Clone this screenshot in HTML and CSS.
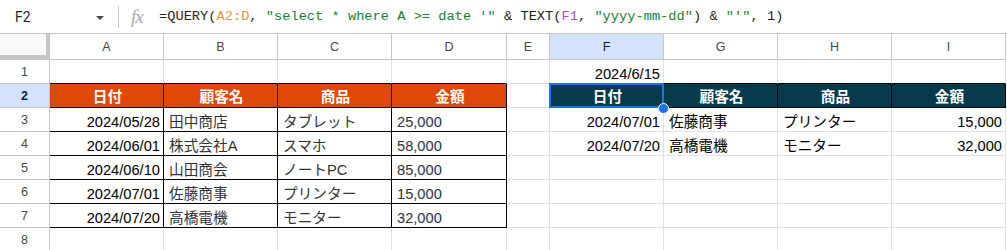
FILE: index.html
```html
<!DOCTYPE html>
<html lang="ja">
<head>
  <meta charset="UTF-8">
  <title>QUERY</title>
  <link rel="stylesheet" href="styles.css">
</head>
<body>

  <div class="fbar">
    <div class="namebox">F2</div>
    <div class="caret"></div>
    <div class="sep"></div>
    <div class="fx">fx</div>
    <div class="formula">=QUERY(<span class="ref1">A2:D</span>, <span class="str">"select * where A &gt;= date '"</span> &amp; TEXT(<span class="ref2">F1</span>, <span class="str">"yyyy-mm-dd"</span>) &amp; <span class="str">"'"</span>, 1)</div>
  </div>

  <div class="sheet">
    <div class="row head">
      <div class="corner"></div>
      <div class="ch">A</div>
      <div class="ch">B</div>
      <div class="ch">C</div>
      <div class="ch">D</div>
      <div class="ch">E</div>
      <div class="ch sel">F</div>
      <div class="ch">G</div>
      <div class="ch">H</div>
      <div class="ch">I</div>
    </div>

    <div class="row">
      <div class="rh">1</div>
      <div class="c top"></div>
      <div class="c top"></div>
      <div class="c top"></div>
      <div class="c top"></div>
      <div class="c"></div>
      <div class="c r top">2024/6/15</div>
      <div class="c top"></div>
      <div class="c top"></div>
      <div class="c top"></div>
    </div>

    <div class="row">
      <div class="rh sel">2</div>
      <div class="c b oh">日付</div>
      <div class="c b oh">顧客名</div>
      <div class="c b oh">商品</div>
      <div class="c b oh">金額</div>
      <div class="c bx"></div>
      <div class="c b th active">日付<span class="handle"></span></div>
      <div class="c b th">顧客名</div>
      <div class="c b th">商品</div>
      <div class="c b th">金額</div>
    </div>

    <div class="row">
      <div class="rh">3</div>
      <div class="c b r">2024/05/28</div>
      <div class="c b g">田中商店</div>
      <div class="c b g">タブレット</div>
      <div class="c b g">25,000</div>
      <div class="c"></div>
      <div class="c r">2024/07/01</div>
      <div class="c">佐藤商事</div>
      <div class="c">プリンター</div>
      <div class="c r">15,000</div>
    </div>

    <div class="row">
      <div class="rh">4</div>
      <div class="c b r">2024/06/01</div>
      <div class="c b g">株式会社A</div>
      <div class="c b g">スマホ</div>
      <div class="c b g">58,000</div>
      <div class="c"></div>
      <div class="c r">2024/07/20</div>
      <div class="c">高橋電機</div>
      <div class="c">モニター</div>
      <div class="c r">32,000</div>
    </div>

    <div class="row">
      <div class="rh">5</div>
      <div class="c b r">2024/06/10</div>
      <div class="c b g">山田商会</div>
      <div class="c b g">ノートPC</div>
      <div class="c b g">85,000</div>
      <div class="c"></div>
      <div class="c"></div>
      <div class="c"></div>
      <div class="c"></div>
      <div class="c"></div>
    </div>

    <div class="row">
      <div class="rh">6</div>
      <div class="c b r">2024/07/01</div>
      <div class="c b g">佐藤商事</div>
      <div class="c b g">プリンター</div>
      <div class="c b g">15,000</div>
      <div class="c"></div>
      <div class="c"></div>
      <div class="c"></div>
      <div class="c"></div>
      <div class="c"></div>
    </div>

    <div class="row">
      <div class="rh">7</div>
      <div class="c b r">2024/07/20</div>
      <div class="c b g">高橋電機</div>
      <div class="c b g">モニター</div>
      <div class="c b g">32,000</div>
      <div class="c"></div>
      <div class="c"></div>
      <div class="c"></div>
      <div class="c"></div>
      <div class="c"></div>
    </div>

    <div class="row">
      <div class="rh">8</div>
      <div class="c"></div>
      <div class="c"></div>
      <div class="c"></div>
      <div class="c"></div>
      <div class="c"></div>
      <div class="c"></div>
      <div class="c"></div>
      <div class="c"></div>
      <div class="c"></div>
    </div>
  </div>

</body>
</html>
```

FILE: styles.css
```css
* {
  margin: 0;
  padding: 0;
  box-sizing: border-box;
}

body {
  width: 1007px;
  height: 250px;
  overflow: hidden;
  background-color: #fff;
  font-family: 'Liberation Sans', 'Noto Sans CJK JP', sans-serif;
  color: #000;
}

/* Formula bar */
.fbar {
  display: flex;
  align-items: center;
  height: 34px;
  border-bottom: 1px solid #c4c7c5;
}

.namebox {
  width: 88px;
  padding-left: 15px;
  font-family: Roboto, 'Liberation Sans', sans-serif;
  font-size: 14px;
  color: #1f1f1f;
}

.caret {
  width: 0;
  height: 0;
  border-left: 4px solid transparent;
  border-right: 4px solid transparent;
  border-top: 4px solid #444746;
  margin-left: 8px;
  margin-top: 2px;
}

.sep {
  width: 1px;
  height: 22px;
  background-color: #c4c7c5;
  margin-left: 14px;
}

.fx {
  width: 40px;
  padding-left: 12px;
  font-family: 'Liberation Serif', serif;
  font-style: italic;
  font-size: 19px;
  color: #a8abae;
  letter-spacing: -1px;
}

.formula {
  font-family: 'Liberation Mono', monospace;
  font-size: 13.7px;
  color: #1f1f1f;
  white-space: pre;
}

.ref1 { color: #e8982e; }
.ref2 { color: #a253c4; }
.str { color: #188038; }

/* Grid */
.row {
  display: grid;
  grid-template-columns: 50px 114px 114px 114px 115px 43px 114px 114px 114px 114px;
  height: 24px;
}

.row.head {
  height: 26px;
}

.corner {
  background-color: #f8f9fa;
  border-right: 4px solid #c4c7c5;
  border-bottom: 5px solid #c4c7c5;
}

.ch {
  display: flex;
  align-items: center;
  justify-content: center;
  font-size: 12.5px;
  color: #444746;
  border-right: 1px solid #c4c7c5;
  border-bottom: 1px solid #c4c7c5;
}

.rh {
  display: flex;
  align-items: center;
  justify-content: center;
  font-size: 12.5px;
  color: #444746;
  border-right: 1px solid #c4c7c5;
  border-bottom: 1px solid #c4c7c5;
}

.ch.sel,
.rh.sel {
  background-color: #d3e3fd;
  color: #0b1f45;
}

.rh.sel {
  font-weight: bold;
}

.c {
  position: relative;
  display: flex;
  align-items: flex-end;
  padding: 0 3px 0 5px;
  font-size: 14.67px;
  line-height: 17px;
  white-space: nowrap;
  border-right: 1px solid #e1e1e1;
  border-bottom: 1px solid #e1e1e1;
}

.c.r {
  justify-content: flex-end;
}

.c.top {
  border-bottom-color: #000;
}

.c.b {
  border-right-color: #000;
  border-bottom-color: #000;
}

.c.bx {
  border-right-color: #000;
}

.c.g {
  color: #333;
}

.c.oh,
.c.th {
  justify-content: center;
  font-weight: bold;
  color: #fff;
  padding-bottom: 1px;
}

.c.oh {
  background-color: #df4806;
}

.c.th {
  background-color: #073b4c;
}

/* Selected cell */
.active::after {
  content: '';
  position: absolute;
  left: -1px;
  top: -1px;
  right: -1px;
  bottom: -1px;
  border: 2px solid #1a73e8;
}

.handle {
  position: absolute;
  right: -6px;
  bottom: -7px;
  width: 11px;
  height: 11px;
  border-radius: 50%;
  background-color: #1a73e8;
  border: 1px solid #fff;
  z-index: 2;
}
```
